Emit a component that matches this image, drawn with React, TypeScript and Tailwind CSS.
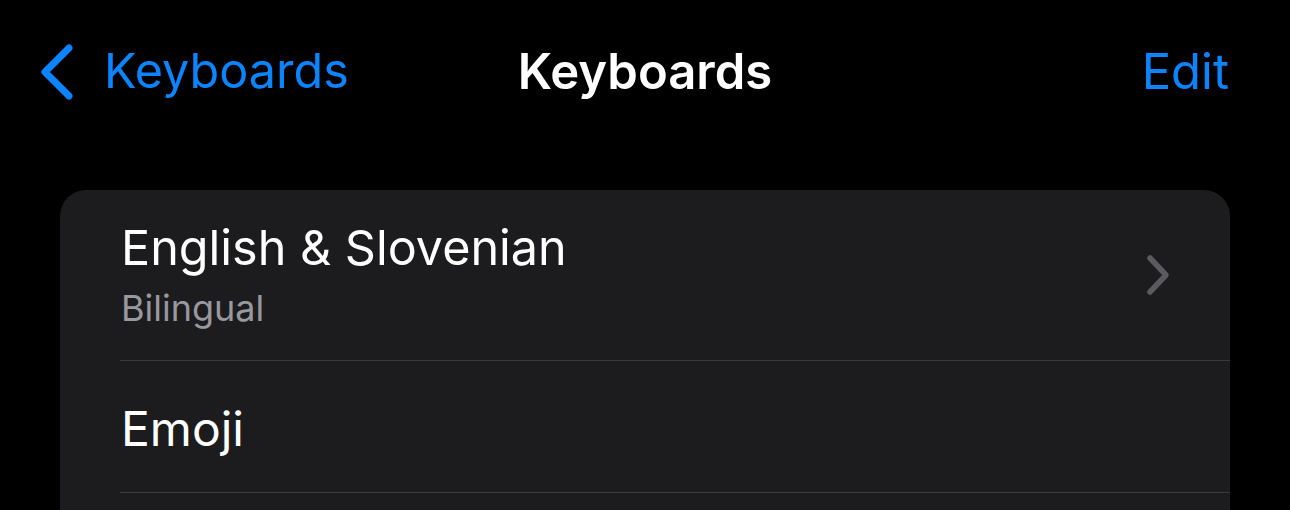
import React from "react";

const font = { fontFamily: "Inter, 'Noto Sans', sans-serif" };

export default function App() {
  return (
    <div
      className="w-[1290px] h-[510px] bg-black overflow-hidden text-white"
      style={font}
    >
      <div className="relative h-[145px] flex items-center justify-between pl-[38px] pr-[61px] pb-[2px]">
        <div className="flex items-center gap-[28px] text-[#0a84ff]">
          <svg width="38" height="58" viewBox="0 0 38 58" fill="none">
            <path
              d="M31 5 L7 29 L31 53"
              stroke="#0a84ff"
              strokeWidth="7"
              strokeLinecap="round"
              strokeLinejoin="round"
            />
          </svg>
          <span className="text-[48.5px] leading-none">Keyboards</span>
        </div>
        <span className="absolute left-1/2 -translate-x-1/2 text-[49px] font-semibold leading-none">
          Keyboards
        </span>
        <span className="text-[49px] leading-none text-[#0a84ff]">Edit</span>
      </div>
      <div className="mx-[60px] mt-[45px] rounded-[26px] bg-[#1c1c1e] overflow-hidden">
        <div className="h-[170px] flex items-center pl-[61px] pr-[59px]">
          <div className="flex-1 flex flex-col">
            <span className="text-[48.5px] leading-[56px]">English &amp; Slovenian</span>
            <span className="mt-[10px] text-[36px] leading-[44px] text-[#98989f]">Bilingual</span>
          </div>
          <svg width="26" height="42" viewBox="0 0 26 42" fill="none">
            <path
              d="M5 4 L21 21 L5 38"
              stroke="#5a5a5f"
              strokeWidth="5.5"
              strokeLinecap="round"
              strokeLinejoin="round"
            />
          </svg>
        </div>
        <div className="ml-[60px] h-px bg-[#3a3a3c]" />
        <div className="h-[131px] flex items-center pl-[61px] pt-[4px]">
          <span className="text-[48px] leading-[56px]">Emoji</span>
        </div>
        <div className="ml-[60px] h-px bg-[#3a3a3c]" />
        <div className="h-[131px]" />
      </div>
    </div>
  );
}
